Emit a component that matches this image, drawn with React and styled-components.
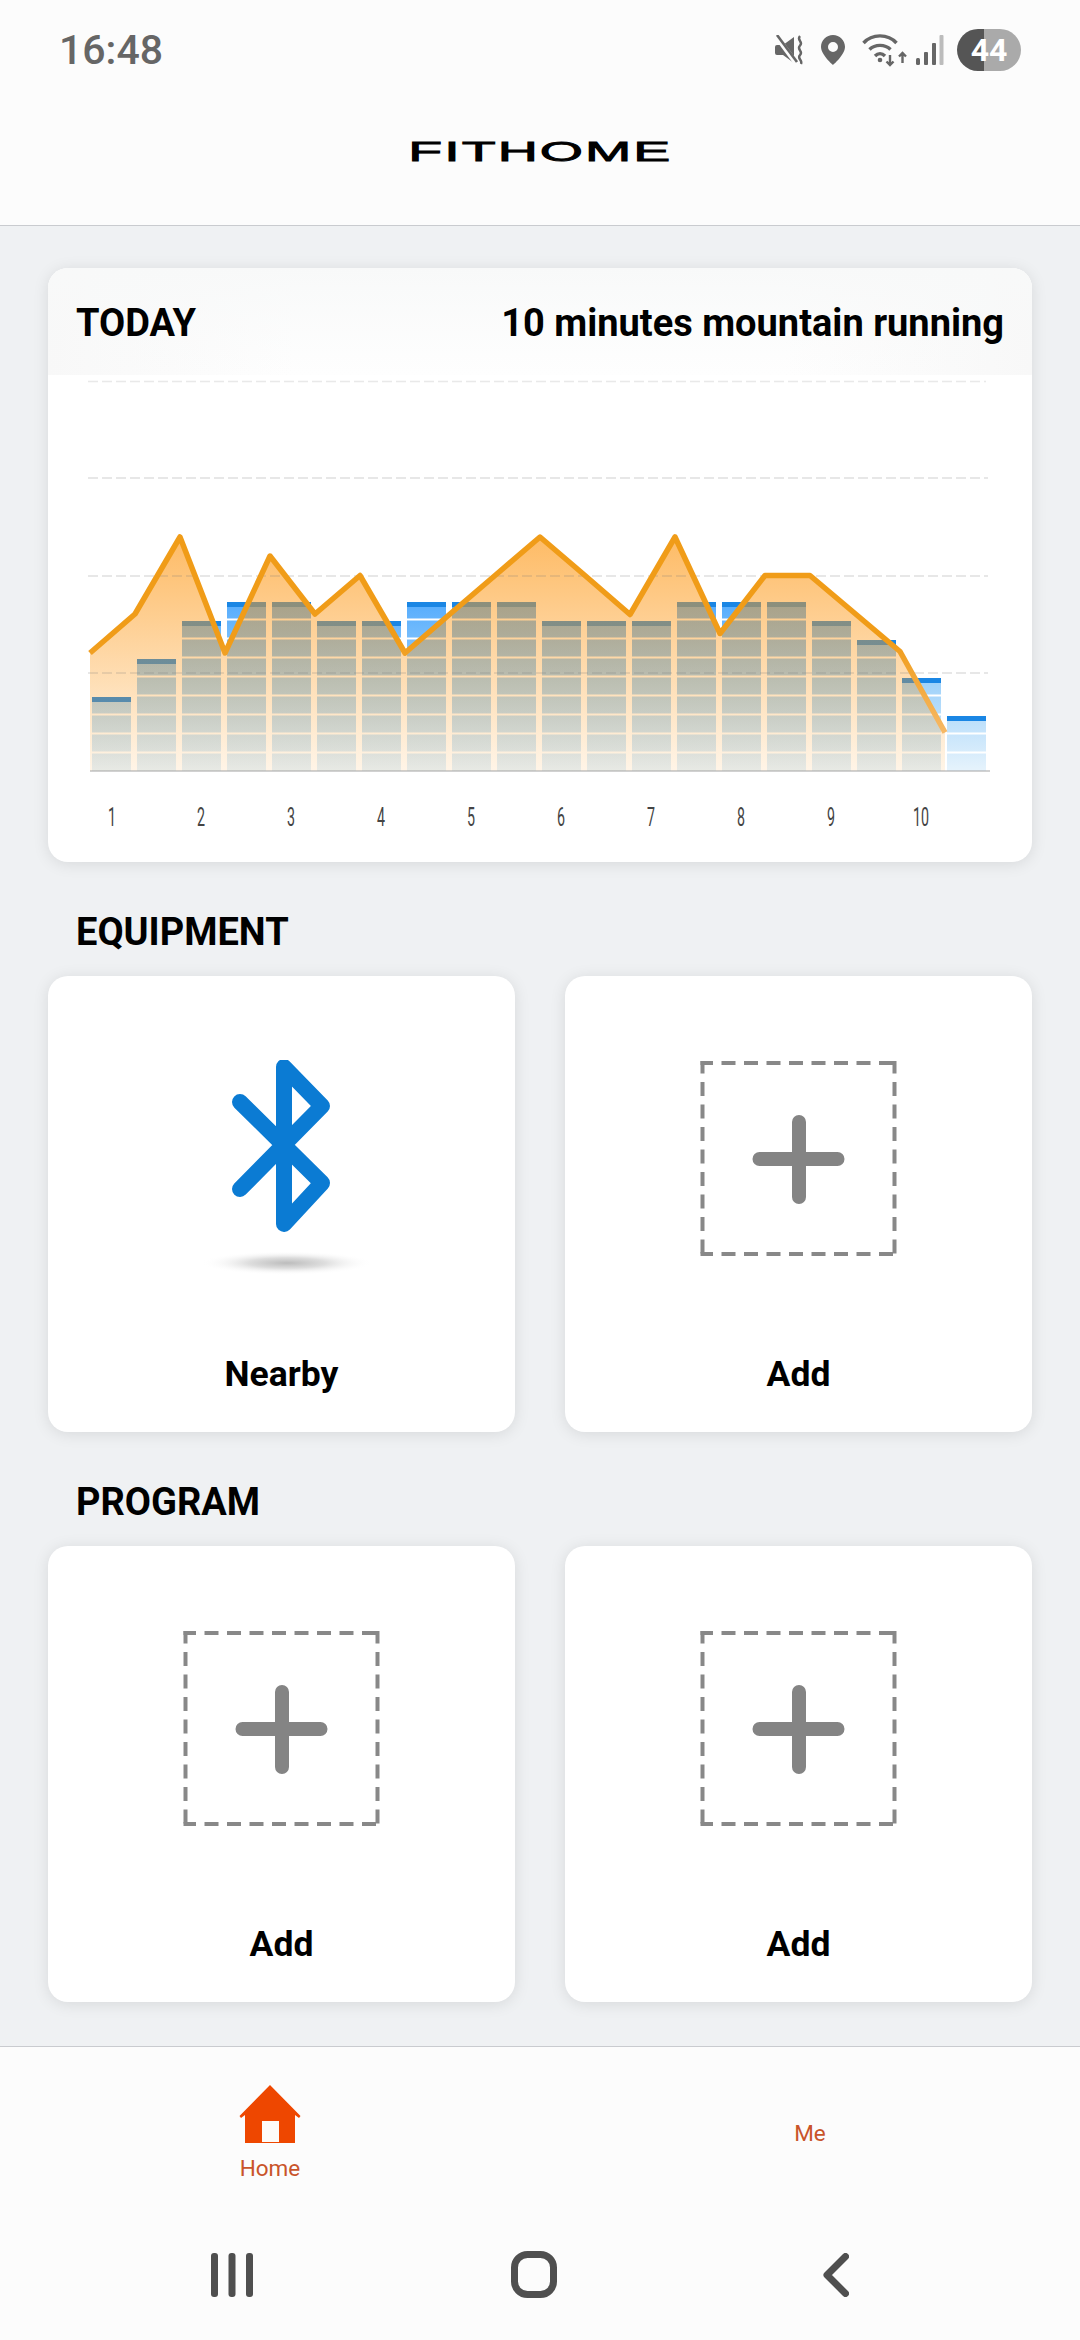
import React from "react";
import styled, { createGlobalStyle } from "styled-components";

const levels = [4, 6, 8, 9, 9, 8, 8, 9, 9, 9, 8, 8, 8, 9, 9, 9, 8, 7, 5, 3];
const linePoints = [
  [90, 653], [135, 614], [180, 537], [225, 653], [270, 556], [315, 614],
  [360, 575.5], [405, 653], [450, 614], [495, 575.5], [540, 537], [585, 575.5],
  [630, 614.5], [675, 537], [720, 633.5], [765, 575.5], [810, 575.5],
  [855, 613.5], [900, 651.5], [945, 732.5],
];
const gridLines = [381.5, 478, 576, 673];
const axisLabels = [112, 201, 291, 381, 471, 561, 651, 741, 831, 921];

const BASE = 771;
const TOP = 602;
const STEP = 19;

const Chart = () => {
  const line = linePoints.map((p) => p.join(",")).join(" ");
  const area = `90,${BASE} ${line} 945,${BASE}`;
  return (
    <ChartSvg viewBox="48 375 984 487">
      <defs>
        <linearGradient id="barFill" gradientUnits="userSpaceOnUse" x1="0" y1={TOP} x2="0" y2={BASE}>
          <stop offset="0" stopColor="#55acfd" />
          <stop offset="0.5" stopColor="#a2d3fa" />
          <stop offset="1" stopColor="#e6f3fc" />
        </linearGradient>
        <linearGradient id="areaFill" gradientUnits="userSpaceOnUse" x1="0" y1="537" x2="0" y2={BASE}>
          <stop offset="0" stopColor="#fd9816" stopOpacity="0.66" />
          <stop offset="0.4" stopColor="#fd9816" stopOpacity="0.44" />
          <stop offset="1" stopColor="#fd9816" stopOpacity="0.1" />
        </linearGradient>
        <linearGradient id="lineStroke" gradientUnits="userSpaceOnUse" x1="0" y1="640" x2="0" y2="735">
          <stop offset="0" stopColor="#f09c18" />
          <stop offset="1" stopColor="#f6b968" />
        </linearGradient>
      </defs>

      {levels.map((level, i) => {
        const x = 92 + i * 45;
        const top = TOP + (9 - level) * STEP;
        const rows = [];
        for (let r = 0; r < level - 1; r++) {
          rows.push(<rect key={r} x={x} y={top + 16.5 + r * STEP} width="39" height="2" fill="#fff" />);
        }
        return (
          <g key={i}>
            <rect x={x} y={top} width="39" height={BASE - top} fill="url(#barFill)" />
            <rect x={x} y={top} width="39" height="5" fill="#1a86e4" />
            {rows}
          </g>
        );
      })}

      <polygon points={area} fill="url(#areaFill)" />

      {gridLines.map((y, i) => (
        <line
          key={y}
          x1="88"
          x2={i === 0 ? 986 : 988}
          y1={y}
          y2={y}
          stroke={i === 0 ? "rgba(120,120,120,0.16)" : "rgba(120,120,120,0.24)"}
          strokeWidth="1.5"
          strokeDasharray="10 4"
        />
      ))}

      <line x1="90" x2="990" y1={BASE} y2={BASE} stroke="#a3a3a3" strokeWidth="1.2" />
      <polyline points={line} fill="none" stroke="url(#lineStroke)" strokeWidth="5.5" strokeLinejoin="round" />

      {axisLabels.map((x, i) => (
        <AxisLabel key={x} x={x} y="825.5" textAnchor="middle" textLength={i === 9 ? 16 : 8} lengthAdjust="spacingAndGlyphs">
          {i + 1}
        </AxisLabel>
      ))}
    </ChartSvg>
  );
};

const AddIcon = () => (
  <SlotSvg viewBox="0 0 200 215">
    <g stroke="#888" strokeWidth="4" strokeDasharray="14 8.5" strokeDashoffset="1.5">
      <line x1="1.5" x2="197.5" y1="3" y2="3" />
      <line x1="1.5" x2="197.5" y1="194" y2="194" />
      <line x1="3.5" x2="3.5" y1="1" y2="196" />
      <line x1="195.5" x2="195.5" y1="1" y2="196" />
    </g>
    <path d="M60.5 99H138.5M100 62V137" stroke="#848484" strokeWidth="14" strokeLinecap="round" />
  </SlotSvg>
);

const BluetoothIcon = () => (
  <SlotSvg viewBox="0 0 200 215">
    <defs>
      <radialGradient id="btShadow">
        <stop offset="0" stopColor="#bcbcbc" />
        <stop offset="0.45" stopColor="#dedede" />
        <stop offset="1" stopColor="#ffffff" stopOpacity="0" />
      </radialGradient>
    </defs>
    <ellipse cx="105" cy="203" rx="86" ry="12" fill="url(#btShadow)" />
    <path
      d="M58 42L140 123L102 164V7L140 46L58 129"
      fill="none"
      stroke="#0b7bd3"
      strokeWidth="16"
      strokeLinecap="round"
      strokeLinejoin="round"
    />
  </SlotSvg>
);

const StatusIcons = () => (
  <Icons>
    <svg width="30" height="30" viewBox="0 0 30 30">
      <path d="M2 10h6L19 2v26L8 20H2a2 2 0 0 1-2-2v-6a2 2 0 0 1 2-2z" fill="#666" />
      <path d="M1 1L21 28" stroke="#fcfcfc" strokeWidth="5" />
      <path d="M2 0L22 27" stroke="#666" strokeWidth="2.6" />
      <path d="M25 1c-4 4 4 6 0 9.500c-4 4 4 6 0 9.500c-3.500 3.500 3 5 1 9" fill="none" stroke="#666" strokeWidth="2.4" />
    </svg>
    <svg width="24" height="30" viewBox="0 0 24 30">
      <path
        fillRule="evenodd"
        d="M12 0C5.400 0 0 5.200 0 11.800C0 20 12 30 12 30S24 20 24 11.800C24 5.200 18.600 0 12 0ZM12 7A5 5 0 1 1 12 17A5 5 0 1 1 12 7Z"
        fill="#666"
      />
    </svg>
    <svg width="46" height="36" viewBox="0 0 46 36" fill="none" stroke="#666">
      <path d="M2.500 11C11 1.500 27 1.500 35.500 11" strokeWidth="3.400" />
      <path d="M8.500 17.500C14 12 24 12 29.500 17.500" strokeWidth="3.400" />
      <path d="M14 24C17 21 21 21 24 24" strokeWidth="3.400" />
      <circle cx="19" cy="28" r="2.300" fill="#666" stroke="none" />
      <path d="M29 23V33M25.500 29.500L29 33L32.500 29.500" strokeWidth="2.400" />
      <path d="M41.500 31V21M38 24.500L41.500 21L45 24.500" strokeWidth="2.400" />
    </svg>
    <svg width="28" height="30" viewBox="0 0 28 30">
      <rect x="0" y="23" width="4" height="7" rx="1.500" fill="#666" />
      <rect x="8" y="17" width="4" height="13" rx="1" fill="#666" />
      <rect x="16" y="8" width="4" height="22" rx="1" fill="#666" />
      <rect x="23.500" y="0" width="4" height="30" rx="1" fill="#bcbcbc" />
    </svg>
    <Battery>44</Battery>
  </Icons>
);

const App = () => {
  return (
    <Screen>
      <GlobalStyle />
      <Header>
        <StatusBar>
          <Clock>16:48</Clock>
          <StatusIcons />
        </StatusBar>
        <TitleBar>
          <Logo>FITHOME</Logo>
        </TitleBar>
      </Header>

      <Content>
        <TodayCard>
          <TodayHeader>
            <span>TODAY</span>
            <span>10 minutes mountain running</span>
          </TodayHeader>
          <Chart />
        </TodayCard>

        <SectionTitle>EQUIPMENT</SectionTitle>
        <CardGrid>
          <Tile>
            <BluetoothIcon />
            <TileLabel>Nearby</TileLabel>
          </Tile>
          <Tile>
            <AddIcon />
            <TileLabel>Add</TileLabel>
          </Tile>
        </CardGrid>

        <SectionTitle>PROGRAM</SectionTitle>
        <CardGrid>
          <Tile>
            <AddIcon />
            <TileLabel>Add</TileLabel>
          </Tile>
          <Tile>
            <AddIcon />
            <TileLabel>Add</TileLabel>
          </Tile>
        </CardGrid>
      </Content>

      <TabBar>
        <TabItem>
          <svg width="62" height="60" viewBox="0 0 62 60">
            <path d="M31 0L61.500 31L60 33L56 30V58H6V30L2 33L0.500 31Z" fill="#ee4700" />
            <rect x="23" y="36" width="17" height="21" fill="#fdfbf8" />
          </svg>
          <TabLabel>Home</TabLabel>
        </TabItem>
        <TabItem>
          <TabLabel>Me</TabLabel>
        </TabItem>
      </TabBar>

      <NavBar>
        <svg width="42" height="44" viewBox="0 0 42 44" fill="#4f4f4f">
          <rect x="0" y="0" width="7" height="44" rx="3" />
          <rect x="17.500" y="0" width="7" height="44" rx="3" />
          <rect x="35" y="0" width="7" height="44" rx="3" />
        </svg>
        <svg width="46" height="47" viewBox="0 0 46 47">
          <rect x="3.500" y="3.500" width="39" height="40" rx="13" fill="none" stroke="#4f4f4f" strokeWidth="7" />
        </svg>
        <svg width="26" height="44" viewBox="0 0 26 44">
          <path d="M22.500 3.500L4 22L22.500 40.500" fill="none" stroke="#4f4f4f" strokeWidth="7" strokeLinecap="round" strokeLinejoin="round" />
        </svg>
      </NavBar>
    </Screen>
  );
};

export default App;

const GlobalStyle = createGlobalStyle`
  html, body {
    margin: 0;
    padding: 0;
    background: #eff1f3;
  }
  * {
    box-sizing: border-box;
  }
`;

const Screen = styled.div`
  width: 1080px;
  height: 2340px;
  display: flex;
  flex-direction: column;
  font-family: Roboto, "Liberation Sans", sans-serif;
  color: #000;
  overflow: hidden;
`;

const Header = styled.div`
  background: #fcfcfc;
  border-bottom: 1.5px solid #c9cbcf;
  height: 226px;
  flex-shrink: 0;
`;

const StatusBar = styled.div`
  height: 100px;
  padding: 0 59px 0 59px;
  display: flex;
  align-items: center;
  justify-content: space-between;
`;

const Clock = styled.span`
  font-size: 41px;
  font-weight: 500;
  color: #666;
`;

const Icons = styled.div`
  display: flex;
  align-items: center;
  svg {
    display: block;
    margin-right: 16px;
  }
  svg:nth-child(3) {
    margin-right: 9px;
  }
  svg:nth-child(4) {
    margin-right: 13px;
  }
`;

const Battery = styled.div`
  width: 64px;
  height: 42px;
  border-radius: 21px;
  background: linear-gradient(90deg, #555 42%, #aaa 42%);
  color: #fff;
  font-size: 32px;
  font-weight: 700;
  display: flex;
  align-items: center;
  justify-content: center;
`;

const TitleBar = styled.div`
  height: 104px;
  display: flex;
  align-items: center;
  justify-content: center;
`;

const Logo = styled.span`
  display: inline-block;
  font-family: "Liberation Sans", sans-serif;
  font-size: 27.5px;
  font-weight: 400;
  line-height: 1;
  letter-spacing: 1px;
  -webkit-text-stroke: 0.8px #000;
  transform: scaleX(2.02);
`;

const Content = styled.main`
  flex: 1;
  padding: 42px 48px 0;
  background: #eff1f3;
`;

const cardLook = `
  background: #fff;
  border-radius: 20px;
  box-shadow: 0 2px 16px rgba(0, 0, 0, 0.1);
  overflow: hidden;
`;

const TodayCard = styled.section`
  ${cardLook}
  height: 594px;
  display: flex;
  flex-direction: column;
`;

const TodayHeader = styled.div`
  height: 107px;
  padding: 0 28px;
  display: flex;
  align-items: center;
  justify-content: space-between;
  background: linear-gradient(#f8f9f9, rgba(255, 255, 255, 0)),
    linear-gradient(90deg, #f8f8f8, #fefefe 25%, #fefefe 75%, #f8f8f8);
  font-size: 38px;
  font-weight: 700;

  span {
    position: relative;
    top: 1px;
  }
`;

const ChartSvg = styled.svg`
  display: block;
  width: 984px;
  height: 487px;
`;

const AxisLabel = styled.text`
  font-family: Roboto, sans-serif;
  font-size: 25px;
  font-weight: 400;
  fill: #444;
`;

const SectionTitle = styled.h2`
  margin: 48px 0 22px;
  padding-left: 28px;
  height: 44px;
  line-height: 44px;
  font-size: 38px;
  font-weight: 700;
`;

const CardGrid = styled.div`
  display: grid;
  grid-template-columns: 467px 467px;
  justify-content: space-between;
`;

const Tile = styled.div`
  ${cardLook}
  height: 456px;
  padding-top: 84px;
  display: flex;
  flex-direction: column;
  align-items: center;
`;

const SlotSvg = styled.svg`
  display: block;
  width: 200px;
  height: 215px;
  flex-shrink: 0;
`;

const TileLabel = styled.div`
  margin-top: 77px;
  font-size: 35.5px;
  font-weight: 700;
  line-height: 44px;
`;

const TabBar = styled.nav`
  height: 169px;
  flex-shrink: 0;
  padding-top: 4px;
  display: grid;
  grid-template-columns: 1fr 1fr;
  background: #fcfcfc;
  border-top: 1.5px solid #c9cbcf;
`;

const TabItem = styled.div`
  display: flex;
  flex-direction: column;
  align-items: center;
  justify-content: center;
  gap: 9px;

  svg {
    display: block;
  }
`;

const TabLabel = styled.span`
  font-size: 22.5px;
  line-height: 28px;
  color: #c9542a;
`;

const NavBar = styled.div`
  height: 125px;
  flex-shrink: 0;
  padding: 0 12px 6px 0;
  display: grid;
  grid-template-columns: repeat(3, 302px);
  justify-content: center;
  justify-items: center;
  align-items: center;
  background: #fcfcfc;
`;
